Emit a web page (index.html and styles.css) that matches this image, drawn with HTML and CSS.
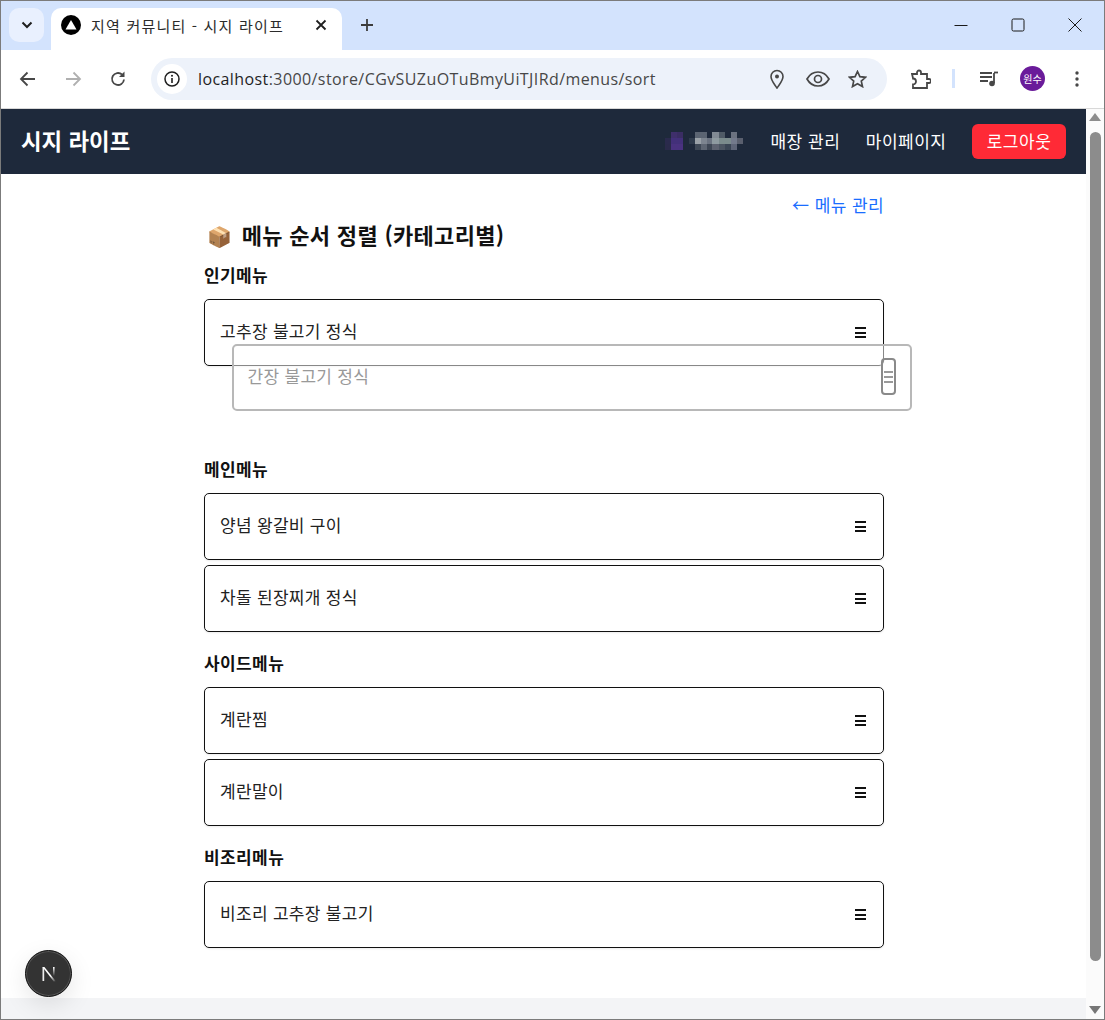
FILE: index.html
```html
<!DOCTYPE html>
<html lang="ko">
<head>
<meta charset="utf-8">
<title>지역 커뮤니티 - 시지 라이프</title>
<link rel="stylesheet" href="styles.css">
</head>
<body>
<div class="window">
  <div class="tabstrip">
    <div class="tab-search"><svg width="12" height="8" viewBox="0 0 12 8"><path d="M1.5 1.5 6 6l4.500-4.500" fill="none" stroke="#1f1f1f" stroke-width="2"/></svg></div>
    <div class="tab">
      <svg class="favicon" width="20" height="20" viewBox="0 0 20 20"><circle cx="10" cy="10" r="10" fill="#000"/><path d="M10 5l5.500 9.500h-11z" fill="#fff"/></svg>
      <span class="tab-title">지역 커뮤니티 - 시지 라이프</span>
      <svg class="tab-close" width="12" height="12" viewBox="0 0 12 12"><path d="M1.500 1.500l9 9m0-9l-9 9" stroke="#1f1f1f" stroke-width="1.800" fill="none"/></svg>
    </div>
    <svg class="new-tab" width="14" height="14" viewBox="0 0 14 14"><path d="M7 1v12M1 7h12" stroke="#3c3c3c" stroke-width="1.800" fill="none"/></svg>
    <div class="win-controls">
      <svg width="14" height="14" viewBox="0 0 14 14"><path d="M0.500 7.500h13" stroke="#1a1a1a" fill="none"/></svg>
      <svg width="14" height="14" viewBox="0 0 14 14"><rect x="1" y="1" width="12" height="12" rx="1.500" stroke="#1a1a1a" fill="none"/></svg>
      <svg width="14" height="14" viewBox="0 0 14 14"><path d="M.5.500l13 13m0-13l-13 13" stroke="#1a1a1a" fill="none"/></svg>
    </div>
  </div>
  <div class="toolbar">
    <svg class="nav-icon" width="18" height="16" viewBox="0 0 18 16"><path d="M16 8H2.500M8.500 1.500 2 8l6.500 6.500" stroke="#474747" stroke-width="1.800" fill="none"/></svg>
    <svg class="nav-icon" width="18" height="16" viewBox="0 0 18 16"><path d="M2 8h13.500M9.500 1.500 16 8l-6.500 6.500" stroke="#b0b0b0" stroke-width="1.800" fill="none"/></svg>
    <svg class="nav-icon" width="18" height="18" viewBox="0 0 18 18"><path d="M15 9.500A6 6 0 1 1 13 4.500" stroke="#474747" stroke-width="1.800" fill="none"/><path d="M15.500 1.500v5.500H10z" fill="#474747"/></svg>
    <div class="omnibox">
      <span class="info-chip"><svg width="16" height="16" viewBox="0 0 16 16"><circle cx="8" cy="8" r="7" stroke="#1f1f1f" stroke-width="1.500" fill="none"/><path d="M8 7v5" stroke="#1f1f1f" stroke-width="1.600"/><circle cx="8" cy="4.800" r="1" fill="#1f1f1f"/></svg></span>
      <span class="url"><span class="url-host">localhost</span>:3000/store/CGvSUZuOTuBmyUiTJIRd/menus/sort</span>
      <span class="omni-icons">
        <svg width="14" height="20" viewBox="0 0 14 20"><path d="M7 19C4 14.500 1 11.500 1 7.500a6 6 0 0 1 12 0C13 11.500 10 14.500 7 19z" stroke="#474747" stroke-width="1.600" fill="none"/><circle cx="7" cy="7.500" r="2" fill="#474747"/></svg>
        <svg class="eye" width="24" height="16" viewBox="0 0 24 16"><path d="M1 8c2.500-4.500 6.500-7 11-7s8.500 2.500 11 7c-2.500 4.500-6.500 7-11 7S3.500 12.500 1 8z" stroke="#474747" stroke-width="1.700" fill="none"/><circle cx="12" cy="8" r="3.500" stroke="#474747" stroke-width="1.700" fill="none"/></svg>
        <svg width="19" height="18" viewBox="0 0 19 18"><path d="M9.500 1.500l2.400 5.200 5.600.6-4.200 3.800 1.200 5.500-5-2.800-5 2.800 1.200-5.500L1.500 7.300l5.600-.6z" stroke="#474747" stroke-width="1.700" fill="none"/></svg>
      </span>
    </div>
    <div class="tool-icons">
      <svg class="ext" width="20" height="20" viewBox="0 0 20 20"><path d="M1 5h5V3.500a2 2 0 0 1 4 0V5h6v5h2a2 2 0 0 1 0 4h-2v5H2v-3.500a2.500 2.500 0 0 0 0-6V9z" stroke="#474747" stroke-width="1.800" fill="none"/></svg>
      <span class="tool-divider"></span>
      <svg class="media" width="20" height="16" viewBox="0 0 20 16"><path d="M1 2h12M1 6h12M1 10h8" stroke="#474747" stroke-width="1.800" fill="none"/><path d="M15 2v10" stroke="#474747" stroke-width="1.800"/><circle cx="13" cy="12.500" r="2.800" fill="#474747"/><path d="M15 1.500h4" stroke="#474747" stroke-width="1.800"/></svg>
      <span class="avatar">원수</span>
      <svg class="dots" width="4" height="16" viewBox="0 0 4 16"><circle cx="2" cy="2" r="1.700" fill="#474747"/><circle cx="2" cy="8" r="1.700" fill="#474747"/><circle cx="2" cy="14" r="1.700" fill="#474747"/></svg>
    </div>
  </div>
  <div class="viewport">
    <div class="page">
      <header class="site-header">
        <span class="brand">시지 라이프</span>
        <nav class="site-nav">
          <svg class="mosaic" width="78" height="20" viewBox="0 0 78 20" shape-rendering="crispEdges">
            <rect x="6" y="0" width="6" height="6" fill="#3f2f6b"/><rect x="12" y="0" width="6" height="6" fill="#3a2d63"/>
            <rect x="0" y="6" width="6" height="6" fill="#2a2a4c"/><rect x="6" y="6" width="12" height="6" fill="#43307a"/>
            <rect x="6" y="12" width="12" height="6" fill="#4a3280"/><rect x="0" y="12" width="6" height="6" fill="#2a2a4a"/>
            <rect x="30" y="0" width="12" height="6" fill="#5b6472"/><rect x="47" y="0" width="7" height="6" fill="#818a94"/><rect x="54" y="0" width="6" height="6" fill="#4f5a66"/><rect x="66" y="0" width="6" height="6" fill="#6b7280"/>
            <rect x="24" y="6" width="6" height="6" fill="#2f3b4c"/><rect x="30" y="6" width="6" height="6" fill="#9aa1a8"/><rect x="36" y="6" width="6" height="6" fill="#7d8590"/><rect x="42" y="6" width="5" height="6" fill="#6a7280"/><rect x="47" y="6" width="7" height="6" fill="#8e9aa0"/><rect x="54" y="6" width="12" height="6" fill="#7a8a8c"/><rect x="66" y="6" width="6" height="6" fill="#737a8c"/><rect x="72" y="6" width="6" height="6" fill="#5a5f6e"/>
            <rect x="30" y="12" width="6" height="6" fill="#3f4957"/><rect x="36" y="12" width="6" height="6" fill="#5e6673"/><rect x="42" y="12" width="5" height="6" fill="#3d4654"/><rect x="47" y="12" width="7" height="6" fill="#5d6270"/><rect x="54" y="12" width="6" height="6" fill="#4b5462"/><rect x="60" y="12" width="6" height="6" fill="#3a4555"/><rect x="66" y="12" width="6" height="6" fill="#5e6578"/>
          </svg>
          <a class="nav-link">매장 관리</a>
          <a class="nav-link">마이페이지</a>
          <button class="logout">로그아웃</button>
        </nav>
      </header>
      <main class="content">
        <div class="back-row"><a class="back-link">← 메뉴 관리</a></div>
        <h1 class="page-title"><span class="emoji">📦</span> 메뉴 순서 정렬 (카테고리별)</h1>

        <section class="group">
          <h2 class="group-title">인기메뉴</h2>
          <div class="card"><span>고추장 불고기 정식</span><span class="handle"><i></i><i></i><i></i></span></div>
          <div class="card card-placeholder"></div>
        </section>
        <section class="group">
          <h2 class="group-title">메인메뉴</h2>
          <div class="card"><span>양념 왕갈비 구이</span><span class="handle"><i></i><i></i><i></i></span></div>
          <div class="card"><span>차돌 된장찌개 정식</span><span class="handle"><i></i><i></i><i></i></span></div>
        </section>
        <section class="group">
          <h2 class="group-title">사이드메뉴</h2>
          <div class="card"><span>계란찜</span><span class="handle"><i></i><i></i><i></i></span></div>
          <div class="card"><span>계란말이</span><span class="handle"><i></i><i></i><i></i></span></div>
        </section>
        <section class="group">
          <h2 class="group-title">비조리메뉴</h2>
          <div class="card"><span>비조리 고추장 불고기</span><span class="handle"><i></i><i></i><i></i></span></div>
        </section>

        <div class="card drag-overlay"><span>간장 불고기 정식</span><span class="handle handle-active"><i></i><i></i><i></i></span></div>
      </main>
      <div class="page-foot"></div>
      <div class="dev-badge">
        <svg width="18" height="18" viewBox="0 0 18 18"><defs><linearGradient id="nfade" x1="0" y1="0" x2="1" y2="1"><stop offset="0" stop-color="#fff"/><stop offset="0.6" stop-color="#fff"/><stop offset="1" stop-color="#fff" stop-opacity="0"/></linearGradient><linearGradient id="nstem" x1="0" y1="0" x2="0" y2="1"><stop offset="0" stop-color="#fff"/><stop offset="1" stop-color="#fff" stop-opacity="0"/></linearGradient></defs><path d="M2.500 2h1.700v14H2.500z" fill="#eee"/><path d="M2.500 2h1.900L16 16.500h-2.200z" fill="url(#nfade)"/><path d="M13 2h1.600v9H13z" fill="url(#nstem)"/></svg>
      </div>
    </div>
    <div class="scrollbar">
      <span class="arrow-up"></span>
      <span class="thumb"></span>
      <span class="arrow-down"></span>
    </div>
  </div>
</div>
</body>
</html>
```
FILE: styles.css
```css
* { box-sizing: border-box; }
html, body { margin: 0; padding: 0; }
body {
  width: 1105px;
  height: 1020px;
  overflow: hidden;
  font-family: "Noto Sans CJK KR", "Noto Sans", sans-serif;
  background: #fff;
}
.window {
  width: 1105px;
  height: 1020px;
  border: 1px solid #7b7b7b;
  display: flex;
  flex-direction: column;
  position: relative;
}

/* tab strip */
.tabstrip {
  height: 49px;
  background: #d3e3fd;
  display: flex;
  align-items: flex-start;
  padding: 7px 0 0 8px;
  flex: none;
}
.tab-search {
  width: 35px;
  height: 34px;
  background: #e9f0fe;
  border-radius: 10px;
  display: flex;
  align-items: center;
  justify-content: center;
}
.tab {
  width: 291px;
  height: 42px;
  margin-left: 7px;
  background: #fff;
  border-radius: 10px 10px 0 0;
  display: flex;
  align-items: center;
  padding: 0 15px 8px 10px;
}
.tab-title {
  margin-left: 10px;
  font-size: 15px;
  letter-spacing: 1.2px;
  color: #2b2b2b;
  flex: 1;
  white-space: nowrap;
}
.new-tab { margin: 10px 0 0 18px; }
.win-controls {
  margin: 10px 0 0 auto;
  display: flex;
  gap: 43px;
  padding-right: 22px;
}

/* toolbar */
.toolbar {
  height: 59px;
  flex: none;
  background: #fff;
  border-radius: 10px 10px 0 0;
  display: flex;
  align-items: center;
  padding: 0 0 1px 18px;
  border-bottom: 1px solid #d8d8d8;
}
.nav-icon { margin-right: 27px; }
.omnibox {
  width: 736px;
  height: 42px;
  margin-left: -3px;
  border-radius: 21px;
  background: #edf2fa;
  display: flex;
  align-items: center;
  padding: 0 20px 0 6px;
}
.info-chip {
  width: 30px;
  height: 30px;
  border-radius: 50%;
  background: #fff;
  display: flex;
  align-items: center;
  justify-content: center;
}
.url {
  margin-left: 11px;
  font-family: "Open Sans", sans-serif;
  font-size: 16px;
  letter-spacing: 0.41px;
  color: #474747;
  white-space: nowrap;
  flex: 1;
}
.url-host { color: #1f1f1f; }
.omni-icons { display: flex; align-items: center; gap: 20px; }
.eye { margin: 0 -2px 0 2px; }
.tool-icons {
  display: flex;
  align-items: center;
  margin-left: 24px;
}
.tool-divider {
  width: 3px;
  height: 19px;
  background: #d3e3fd;
  margin: 0 24px 0 21px;
}
.avatar {
  width: 25px;
  height: 25px;
  margin-left: 21px;
  border-radius: 50%;
  background: #6a1b9a;
  color: #fff;
  font-size: 10px;
  display: flex;
  align-items: center;
  justify-content: center;
}
.dots { margin-left: 30px; }

/* viewport */
.viewport { flex: 1; display: flex; min-height: 0; }
.page {
  width: 1085px;
  display: flex;
  flex-direction: column;
  position: relative;
}
.site-header {
  height: 65px;
  flex: none;
  background: #1e293b;
  display: flex;
  align-items: center;
  justify-content: space-between;
  padding: 0 20px 0 20px;
  color: #fff;
}
.brand { font-size: 22.4px; font-weight: 700; margin-bottom: 3px; }
.site-nav { display: flex; align-items: center; }
.mosaic { margin-right: 27px; }
.nav-link { font-size: 17px; letter-spacing: .5px; color: #fff; margin: 0 25.5px 3px 0; }
.logout {
  width: 94px;
  height: 35px;
  border: 0;
  border-radius: 6px;
  background: #ff2a36;
  color: #fff;
  font: inherit;
  font-size: 17px;
  letter-spacing: .5px;
  padding: 0 0 3px;
}

.content {
  flex: 1;
  min-height: 0;
  width: 680px;
  margin: 0 auto;
  position: relative;
  padding-top: 19px;
  left: 0.5px;
}
.back-row { display: flex; justify-content: flex-end; height: 24px; line-height: 24px; }
.back-link { color: #1a6dff; font-size: 17px; letter-spacing: .4px; }
.page-title {
  margin: 3px 0 13px;
  font-size: 22px;
  letter-spacing: .3px;
  font-weight: 700;
  line-height: 28px;
  color: #111;
}
.emoji { margin: 0 3px 0 3px; font-size: 20px; }
.group { padding-bottom: 14px; }
.group-title {
  margin: 0 0 12px;
  font-size: 17px;
  letter-spacing: .4px;
  font-weight: 700;
  line-height: 24px;
  color: #111;
}
.card {
  width: 680px;
  height: 67px;
  margin-bottom: 5px;
  border: 1px solid #111;
  border-radius: 5px;
  background: #fff;
  display: flex;
  align-items: center;
  justify-content: space-between;
  padding: 0 17px 4px 15px;
  font-size: 17px;
  letter-spacing: .3px;
  color: #222;
  box-shadow: 0 1px 2px rgba(0,0,0,.08);
}
.card-placeholder { visibility: hidden; }
.handle {
  width: 11px;
  display: flex;
  flex-direction: column;
  gap: 2.500px;
  margin-top: 4px;
}
.handle i { display: block; height: 2px; background: #111; }
.drag-overlay {
  position: absolute;
  left: 27.5px;
  top: 170px;
  margin: 0;
  background: rgba(255,255,255,.5);
  border: 2px solid #b8b8b8;
  color: #999;
  box-shadow: none;
  padding: 0 14px 4px 14px;
}
.handle-active {
  width: 15px;
  height: 37px;
  border: 2px solid #8a8a8a;
  border-radius: 4px;
  justify-content: center;
  align-items: stretch;
  padding: 0 1px;
  gap: 3px;
  margin-top: 2px;
}
.handle-active i { background: #999; }
.page-foot {
  height: 21px;
  flex: none;
  background: #f3f4f6;
}
.dev-badge {
  position: absolute;
  left: 24px;
  bottom: 22px;
  width: 47px;
  height: 47px;
  border-radius: 50%;
  background: #333;
  border: 1.500px solid #111;
  box-shadow: 0 0 0 1px #555 inset, 0 8px 24px rgba(0,0,0,.1);
  display: flex;
  align-items: center;
  justify-content: center;
}

/* scrollbar */
.scrollbar {
  width: 18px;
  background: #fbfbfb;
  display: flex;
  flex-direction: column;
  align-items: center;
  padding: 4px 0 5px;
}
.thumb {
  width: 11px;
  flex: 1;
  margin: 11px 0 45px;
  border-radius: 6px;
  background: #8c8c8c;
}
.arrow-up, .arrow-down {
  width: 0;
  height: 0;
  border-left: 6px solid transparent;
  border-right: 6px solid transparent;
}
.arrow-up { border-bottom: 8px solid #8c8c8c; }
.arrow-down { border-top: 8px solid #777; }
```
